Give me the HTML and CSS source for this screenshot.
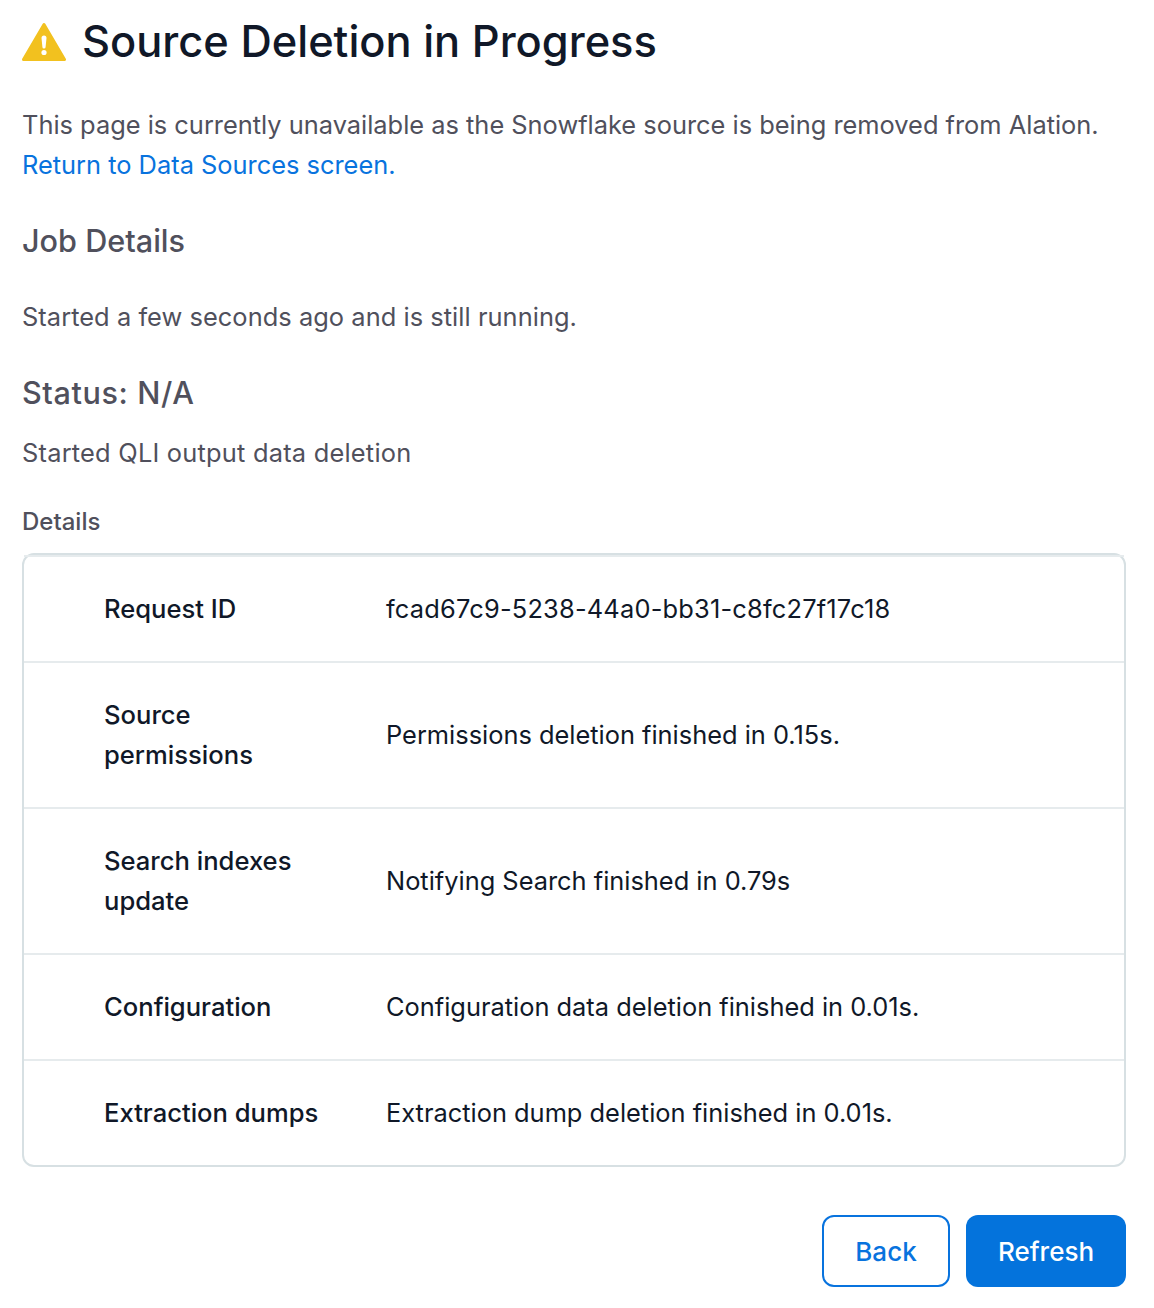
FILE: index.html
```html
<!DOCTYPE html>
<html lang="en">
<head>
<meta charset="utf-8">
<title>Source Deletion in Progress</title>
<link rel="stylesheet" href="styles.css">
</head>
<body>
<main class="page">
  <header class="title-row">
    <svg class="warn" width="44" height="40" viewBox="0 0 44 40" aria-hidden="true">
      <path d="M22 2.5 L42.5 37.5 H1.5 Z" fill="#f2c11f" stroke="#f2c11f" stroke-width="3" stroke-linejoin="round"/>
      <path d="M19.5 16 a2.5 2.5 0 0 1 5 0 L23.6 25 a1.6 1.6 0 0 1 -3.2 0 Z" fill="#fff"/>
      <circle cx="22" cy="30.5" r="2.6" fill="#fff"/>
    </svg>
    <h1>Source Deletion in Progress</h1>
  </header>
  <p class="intro">This page is currently unavailable as the Snowflake source is being removed from Alation.<br><a href="#">Return to Data Sources screen.</a></p>
  <h2 class="job">Job Details</h2>
  <p class="started">Started a few seconds ago and is still running.</p>
  <h2 class="status">Status: N/A</h2>
  <p class="step">Started QLI output data deletion</p>
  <div class="label">Details</div>
  <div class="card">
    <div class="row"><div class="key">Request ID</div><div class="val uuid">fcad67c9-5238-44a0-bb31-c8fc27f17c18</div></div>
    <div class="row"><div class="key">Source permissions</div><div class="val">Permissions deletion finished in 0.15s.</div></div>
    <div class="row"><div class="key">Search indexes update</div><div class="val">Notifying Search finished in 0.79s</div></div>
    <div class="row"><div class="key">Configuration</div><div class="val">Configuration data deletion finished in 0.01s.</div></div>
    <div class="row"><div class="key">Extraction dumps</div><div class="val">Extraction dump deletion finished in 0.01s.</div></div>
  </div>
  <div class="actions">
    <button class="btn secondary">Back</button>
    <button class="btn primary">Refresh</button>
  </div>
</main>
</body>
</html>
```
FILE: styles.css
```css
* { box-sizing: border-box; }
html, body { margin: 0; padding: 0; background: #fff; }
body { font-family: Inter, "Noto Sans", sans-serif; color: #50505c; font-size: 25.4px; }
.page { padding: 16px 28px 0 22px; width: 1154px; }
.title-row { display: flex; align-items: center; gap: 16px; height: 52px; }
.warn { flex: none; }
h1 { margin: -2px 0 0; font-size: 43.4px; font-weight: 500; color: #101828; line-height: 52px; }
.intro { margin: 37px 0 0; line-height: 40px; }
a { color: #0873de; text-decoration: none; }
h2 { margin: 0; font-size: 30.6px; font-weight: 500; line-height: 40px; }
.job { margin-top: 36px; }
.started { margin: 36px 0 0; line-height: 40px; letter-spacing: .05px; }
.status { margin-top: 36px; letter-spacing: .6px; }
.step { margin: 20px 0 0; line-height: 40px; letter-spacing: .22px; }
.label { margin: 33px 0 0; font-size: 24px; font-weight: 500; line-height: 32px; }
.card { margin-top: 15px; border: 2px solid #d7e0e3; border-radius: 12px; }
.row { display: flex; align-items: center; padding: 32px 0 32px 80px; border-top: 2px solid #e6ebed; color: #101828; }
.key { width: 282px; flex: none; padding-right: 40px; line-height: 40px; font-weight: 500; font-size: 25.6px; }
.val { line-height: 40px; }
.uuid { letter-spacing: .2px; }
.actions { display: flex; justify-content: flex-end; gap: 16px; margin-top: 48px; }
.btn { height: 72px; border-radius: 12px; font: 500 26px Inter, sans-serif; }
.secondary { width: 128px; background: #fff; color: #0873de; border: 2px solid #0873de; }
.primary { width: 160px; background: #0473dc; color: #fff; border: 0; }
```
